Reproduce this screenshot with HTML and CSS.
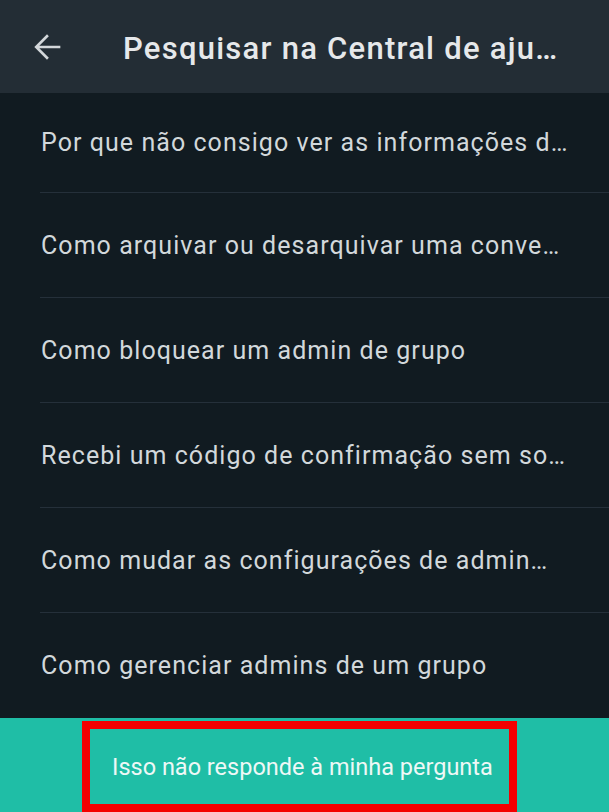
FILE: index.html
```html
<!DOCTYPE html>
<html lang="pt-BR">
<head>
  <meta charset="UTF-8">
  <meta name="viewport" content="width=device-width, initial-scale=1.0">
  <title>Pesquisar na Central de ajuda</title>
  <link rel="stylesheet" href="styles.css">
</head>
<body>
<div class="screen">
  <header class="topbar">
    <button class="back" aria-label="Voltar">
      <svg viewBox="0 0 24 24"><path d="M20 11.2H7.4l5.7-5.7-1.1-1.1-7.6 7.6 7.6 7.6 1.1-1.1-5.7-5.7H20v-1.6z" fill="currentColor"/></svg>
    </button>
    <h1 class="title">Pesquisar na Central de aju…</h1>
  </header>

  <ul class="results">
    <li>Por que não consigo ver as informações d…</li>
    <li>Como arquivar ou desarquivar uma conve…</li>
    <li>Como bloquear um admin de grupo</li>
    <li>Recebi um código de confirmação sem so…</li>
    <li>Como mudar as configurações de admin…</li>
    <li>Como gerenciar admins de um grupo</li>
  </ul>

  <footer class="bottombar">
    <button class="no-answer">Isso não responde à minha pergunta</button>
  </footer>
</div>
</body>
</html>
```

FILE: styles.css
```css
html, body {
  margin: 0;
  padding: 0;
  height: 100%;
  background: #111b21;
  font-family: Roboto, 'Noto Sans', sans-serif;
}
.screen {
  height: 812px;
  display: flex;
  flex-direction: column;
  overflow: hidden;
}
.topbar {
  height: 93px;
  flex-shrink: 0;
  background: #232d35;
  display: flex;
  align-items: center;
}
.back {
  background: none;
  border: 0;
  padding: 0;
  margin: 0 0 0 27px;
  width: 40px;
  height: 40px;
  color: #d3d7da;
  display: flex;
}
.back svg {
  width: 40px;
  height: 40px;
}
.title {
  margin: 0 0 0 56px;
  font-size: 31px;
  font-weight: 500;
  letter-spacing: 1.25px;
  color: #e6e8ea;
  white-space: nowrap;
  position: relative;
  top: 2px;
}
.results {
  list-style: none;
  margin: 0;
  padding: 0 0 0 40px;
  flex: 1;
}
.results li {
  height: 104px;
  border-bottom: 1px solid #25303a;
  display: flex;
  align-items: center;
  padding-left: 1px;
  font-size: 25px;
  letter-spacing: 1.05px;
  color: #d2d8db;
  white-space: nowrap;
}
.results li:first-child {
  height: 99px;
}
.results li:last-child {
  border-bottom: 0;
}
.bottombar {
  height: 94px;
  flex-shrink: 0;
  background: #1fbea6;
  display: flex;
  align-items: flex-end;
  padding-left: 82px;
}
.no-answer {
  width: 435px;
  height: 91px;
  box-sizing: border-box;
  border: 8px solid #f40000;
  background: none;
  font-family: inherit;
  font-size: 23.5px;
  color: #eef8f6;
  padding: 0 0 0 22px;
  text-align: left;
}
```
